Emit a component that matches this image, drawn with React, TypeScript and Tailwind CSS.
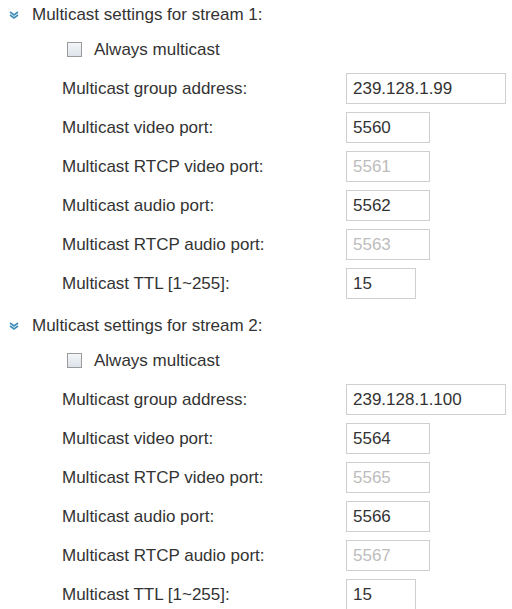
const streams = [
  {
    id: 1,
    address: '239.128.1.99',
    video: '5560',
    rtcpVideo: '5561',
    audio: '5562',
    rtcpAudio: '5563',
    ttl: '15',
  },
  {
    id: 2,
    address: '239.128.1.100',
    video: '5564',
    rtcpVideo: '5565',
    audio: '5566',
    rtcpAudio: '5567',
    ttl: '15',
  },
];

const Chevrons = () => (
  <svg width="10" height="8" viewBox="0 0 10 8" className="shrink-0">
    <path d="M1 1 L5 4 L9 1" fill="none" stroke="#3f8db8" strokeWidth="1.6" />
    <path d="M1 4 L5 7 L9 4" fill="none" stroke="#3f8db8" strokeWidth="1.6" />
  </svg>
);

type FieldProps = {
  label: string;
  value: string;
  width: string;
  disabled?: boolean;
};

const Field = ({ label, value, width, disabled }: FieldProps) => (
  <div className="flex h-[39px] items-center pl-[62px]">
    <span className="w-[284px] shrink-0">{label}</span>
    <div
      className={`flex h-[31px] ${width} items-center border border-[#cfcfcf] bg-white pl-[6px] text-[17px] ${
        disabled ? 'text-[#bdbdbd]' : 'text-[#333]'
      }`}
    >
      {value}
    </div>
  </div>
);

const StreamSection = ({ s }: { s: (typeof streams)[number] }) => (
  <section>
    <div className="flex h-[30px] items-center gap-[13px] pl-[9px]">
      <Chevrons />
      <span>Multicast settings for stream {s.id}:</span>
    </div>
    <div className="mt-[4px] flex h-[31px] items-center gap-[12px] pl-[67px]">
      <span className="h-[15px] w-[15px] border border-[#9a9a9a] bg-gradient-to-b from-[#f4f6f8] to-[#dde3ea]" />
      <span>Always multicast</span>
    </div>
    <div className="mt-[4px]">
      <Field label="Multicast group address:" value={s.address} width="w-[160px]" />
      <Field label="Multicast video port:" value={s.video} width="w-[84px]" />
      <Field label="Multicast RTCP video port:" value={s.rtcpVideo} width="w-[84px]" disabled />
      <Field label="Multicast audio port:" value={s.audio} width="w-[84px]" />
      <Field label="Multicast RTCP audio port:" value={s.rtcpAudio} width="w-[84px]" disabled />
      <Field label="Multicast TTL [1~255]:" value={s.ttl} width="w-[70px]" />
    </div>
  </section>
);

export default function App() {
  return (
    <div className="flex h-[609px] w-[512px] flex-col gap-[8px] overflow-hidden bg-white font-['Liberation_Sans',Arial,sans-serif] text-[17px] text-[#333]">
      {streams.map((s) => (
        <StreamSection key={s.id} s={s} />
      ))}
    </div>
  );
}
